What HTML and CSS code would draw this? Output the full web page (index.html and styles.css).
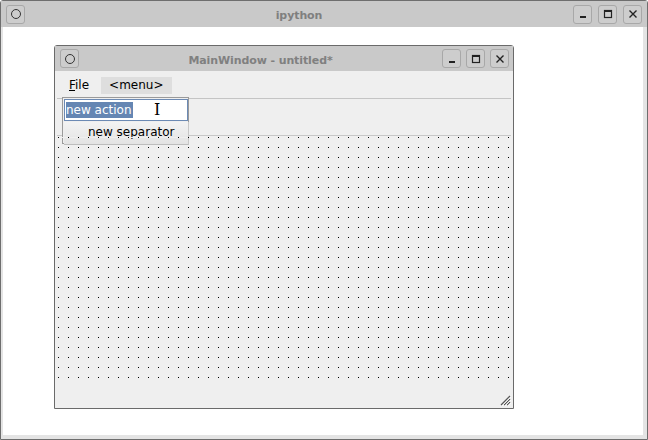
FILE: index.html
```html
<!DOCTYPE html>
<html>
<head>
<meta charset="utf-8">
<link rel="stylesheet" href="styles.css">
</head>
<body>
<div class="outer">
  <div class="titlebar">
    <div class="tb-btn"><span class="ring"></span></div>
    <div class="title">ipython</div>
    <div class="tb-right">
      <div class="tb-btn"><svg width="10" height="10" viewBox="0 0 10 10"><rect x="2" y="7" width="6" height="2" fill="#222"/></svg></div>
      <div class="tb-btn"><svg width="10" height="10" viewBox="0 0 10 10"><rect x="1.5" y="1.5" width="7" height="7" fill="none" stroke="#222" stroke-width="1.2"/><rect x="1.5" y="1.5" width="7" height="1.5" fill="#222"/></svg></div>
      <div class="tb-btn"><svg width="10" height="10" viewBox="0 0 10 10"><path d="M1.5 1.5 L8.5 8.5 M8.5 1.5 L1.5 8.5" stroke="#222" stroke-width="1.4"/></svg></div>
    </div>
  </div>
  <div class="client">
    <div class="inner">
      <div class="titlebar small">
        <div class="tb-btn"><span class="ring"></span></div>
        <div class="title">MainWindow - untitled*</div>
        <div class="tb-right">
          <div class="tb-btn"><svg width="10" height="10" viewBox="0 0 10 10"><rect x="2" y="7" width="6" height="2" fill="#222"/></svg></div>
          <div class="tb-btn"><svg width="10" height="10" viewBox="0 0 10 10"><rect x="1.5" y="1.5" width="7" height="7" fill="none" stroke="#222" stroke-width="1.2"/><rect x="1.5" y="1.5" width="7" height="1.5" fill="#222"/></svg></div>
          <div class="tb-btn"><svg width="10" height="10" viewBox="0 0 10 10"><path d="M1.5 1.5 L8.5 8.5 M8.5 1.5 L1.5 8.5" stroke="#222" stroke-width="1.4"/></svg></div>
        </div>
      </div>
      <div class="menubar">
        <span class="menu-item"><u>F</u>ile</span>
        <span class="menu-item active">&lt;menu&gt;</span>
        <div class="popup">
          <div class="edit"><span class="sel">new action</span><span class="ibeam">I</span></div>
          <div class="sepitem">new separator</div>
        </div>
      </div>
      <div class="toolbar"></div>
      <div class="canvas"></div>
      <div class="statusbar">
        <svg class="grip" width="12" height="12" viewBox="0 0 12 12">
          <path d="M11 2 L2 11 M11 5 L5 11 M11 8 L8 11" stroke="#555" stroke-width="1.2"/>
          <path d="M12 3 L3 12 M12 6 L6 12 M12 9 L9 12" stroke="#fff" stroke-width="0.8"/>
        </svg>
      </div>
    </div>
  </div>
</div>
</body>
</html>
```
FILE: styles.css
```css
html, body { margin: 0; padding: 0; background: #fff; }
body { font-family: "DejaVu Sans", sans-serif; font-size: 12px; color: #000; }
.outer {
  width: 648px; height: 440px; box-sizing: border-box;
  border: 1px solid #6e6e6e; border-radius: 3px 3px 0 0;
  display: flex; flex-direction: column; background: #c8c8c8;
}
.titlebar {
  height: 26px; flex: none; display: flex; align-items: center;
  padding: 0 5px; background: #c9c9c9;
}
.tb-btn {
  width: 17px; height: 17px; border: 1px solid #a8a8a8; border-radius: 3px;
  background: #cdcdcd; display: flex; align-items: center; justify-content: center;
  box-sizing: content-box;
}
.ring { width: 8px; height: 8px; border: 1.5px solid #333; border-radius: 50%; }
.title {
  flex: 1; text-align: center; font-weight: bold; font-size: 11px; color: #7f7f7f;
  font-family: "DejaVu Sans", sans-serif; letter-spacing: -0.1px; padding-top: 2px;
}
.tb-right { display: flex; gap: 6px; }
.client {
  flex: 1; background: #fff; border: 4px solid #e4e4e4; border-top: 0;
  border-left-width: 2px; padding: 18px 0 0 51px;
}
.inner {
  width: 460px; height: 364px; box-sizing: border-box;
  border: 1px solid #6a6a6a; border-radius: 3px 3px 0 0;
  background: #efefef; display: flex; flex-direction: column;
}
.titlebar.small { height: 25px; padding: 0 4px 0 5px; }
.titlebar.small .tb-btn { width: 17px; height: 17px; }
.titlebar.small .title { color: #808080; padding-top: 3px; }
.titlebar.small .tb-right { gap: 5px; }
.menubar {
  height: 28px; flex: none; display: flex; align-items: center; padding: 1px 0 0 12px;
  box-sizing: border-box;
  position: relative; border-bottom: 1px solid #c4c4c4; margin: 0 2px;
}
.menu-item { line-height: 17px; }
.menu-item.active { background: #dedede; padding: 0 8px; margin-left: 12px; }
.popup {
  position: absolute; left: 5px; top: 26px; width: 127px; height: 47px;
  box-sizing: border-box; border: 1px solid #9a9a9a; background: #efefef;
  padding: 1px 0 0 1px;
}
.edit {
  height: 22px; width: 124px; box-sizing: border-box; border: 1px solid #6c8ab4;
  background: #fff; position: relative; padding: 2px 0 0 1px;
}
.sel { background: #6586b3; color: #fff; line-height: 16px; display: inline-block; padding-right: 1px; }
.ibeam {
  position: absolute; left: 89px; top: 1px; font-family: "DejaVu Serif", serif;
  font-size: 16px; line-height: 18px; color: #000;
}
.sepitem {
  margin-top: 1px; height: 23px; width: 125px; box-sizing: border-box;
  line-height: 21px; padding-left: 24px;
  background: linear-gradient(#f3f3f3, #e3e3e3); border-bottom: 1px solid #bdbdbd;
  border-right: 1px solid #c8c8c8;
}
.toolbar { height: 36px; flex: none; border-bottom: 1px solid #c8c8c8; margin: 0 2px; }
.canvas {
  height: 249px; flex: none; margin: 0 2px;
  background-color: #efefef;
  background-image: linear-gradient(90deg, #000 1px, transparent 1px);
  background-size: 10px 10px;
  background-position: 1px 0;
  -webkit-mask-image: linear-gradient(#000 1px, transparent 1px);
  mask-image: linear-gradient(#000 1px, transparent 1px);
  -webkit-mask-size: 10px 10px;
  mask-size: 10px 10px;
  -webkit-mask-position: 0 1px;
  mask-position: 0 1px;
}
.statusbar { flex: 1; display: flex; justify-content: flex-end; align-items: flex-end; padding: 0 2px 2px 0; }
.grip { display: block; }
```
